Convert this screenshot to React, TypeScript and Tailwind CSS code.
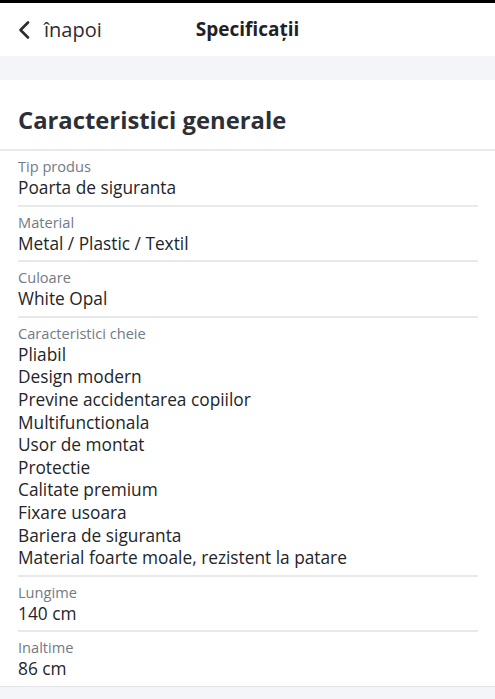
import React from "react";

const specs = [
  { label: "Tip produs", values: ["Poarta de siguranta"] },
  { label: "Material", values: ["Metal / Plastic / Textil"] },
  { label: "Culoare", values: ["White Opal"] },
  {
    label: "Caracteristici cheie",
    values: [
      "Pliabil",
      "Design modern",
      "Previne accidentarea copiilor",
      "Multifunctionala",
      "Usor de montat",
      "Protectie",
      "Calitate premium",
      "Fixare usoara",
      "Bariera de siguranta",
      "Material foarte moale, rezistent la patare",
    ],
  },
  { label: "Lungime", values: ["140 cm"] },
  { label: "Inaltime", values: ["86 cm"] },
];

export default function App() {
  return (
    <div
      className="min-h-[699px] bg-[#f3f5f8] text-[#25282d]"
      style={{ fontFamily: '"Open Sans", "Noto Sans", sans-serif' }}
    >
      {/* Status strip */}
      <div className="h-[3px] bg-black" />

      {/* Header */}
      <header className="relative flex h-[53px] items-center bg-white px-[17px]">
        <button className="flex items-center gap-[13px] text-[#2a2d33]">
          <svg width="14" height="20" viewBox="0 0 14 20" fill="none">
            <path
              d="M11 2.5L3.5 10L11 17.5"
              stroke="currentColor"
              strokeWidth="2.6"
              strokeLinecap="round"
              strokeLinejoin="round"
            />
          </svg>
          <span className="text-[20px] leading-none">înapoi</span>
        </button>
        <h1 className="absolute left-1/2 -translate-x-1/2 text-[19px] font-bold text-[#1f2126]">
          Specificații
        </h1>
      </header>

      {/* Gap */}
      <div className="h-[24px]" />

      {/* Section */}
      <section className="border-b border-[#e3e4e6] bg-white">
        <h2 className="flex h-[71px] items-center border-b-2 border-[#e8e9eb] px-[18px] pt-[12px] text-[23.8px] font-bold text-[#2c3036]">
          Caracteristici generale
        </h2>
        <div className="px-[18px] pr-[17px]">
          {specs.map((s, i) => (
            <div
              key={s.label}
              className={`pt-[5px] pb-[5px] ${
                i < specs.length - 1 ? "border-b-2 border-[#e8e9eb]" : ""
              }`}
            >
              <div className="text-[14.6px] leading-[21px] text-[#717a85]">{s.label}</div>
              {s.values.map((v) => (
                <div
                  key={v}
                  className="text-[17.3px] font-medium leading-[22.6px] text-[#222529]"
                >
                  {v}
                </div>
              ))}
            </div>
          ))}
        </div>
      </section>
    </div>
  );
}
